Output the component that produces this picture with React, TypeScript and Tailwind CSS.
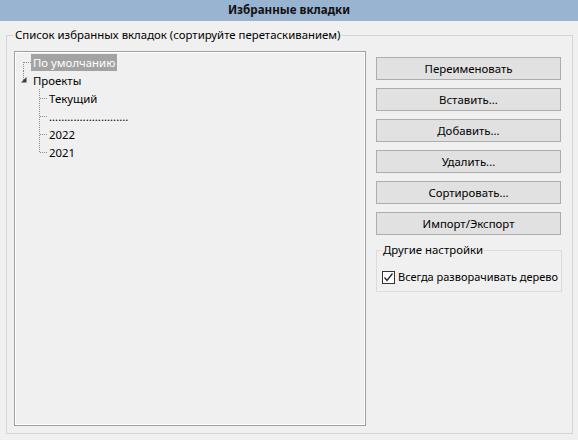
import React from "react";

const FONT = { fontFamily: '"Noto Sans", "Open Sans", sans-serif' };

type Row = {
  label: string;
  selected?: boolean;
  guides: React.ReactNode[];
};

const DOT = "#8c8c8c";

function Cell({ children }: { children?: React.ReactNode }) {
  return (
    <svg width="16" height="18" viewBox="0 0 16 18" className="shrink-0 block">
      {children}
    </svg>
  );
}

const vFull = <line x1="7.5" y1="0" x2="7.5" y2="18" stroke={DOT} strokeDasharray="1 1" />;
const vTopHalf = <line x1="7.5" y1="0" x2="7.5" y2="9" stroke={DOT} strokeDasharray="1 1" />;
const vBottomHalf = <line x1="7.5" y1="9" x2="7.5" y2="18" stroke={DOT} strokeDasharray="1 1" />;
const hHalf = <line x1="8" y1="9.5" x2="15" y2="9.5" stroke={DOT} strokeDasharray="1 1" />;
const triangle = <polygon points="10.5,6 10.5,11.5 5,11.5" fill="#3c3c3c" />;

const rows: Row[] = [
  { label: "По умолчанию", selected: true, guides: [<Cell key="a">{vBottomHalf}{hHalf}</Cell>] },
  { label: "Проекты", guides: [<Cell key="a">{vTopHalf}{triangle}</Cell>] },
  { label: "Текущий", guides: [<Cell key="a" />, <Cell key="b">{vFull}{hHalf}</Cell>] },
  { label: "..........................", guides: [<Cell key="a" />, <Cell key="b">{vFull}{hHalf}</Cell>] },
  { label: "2022", guides: [<Cell key="a" />, <Cell key="b">{vFull}{hHalf}</Cell>] },
  { label: "2021", guides: [<Cell key="a" />, <Cell key="b">{vTopHalf}{hHalf}</Cell>] },
];

function WinButton({ children }: { children: React.ReactNode }) {
  return (
    <button className="h-[23px] w-[185px] bg-[#e1e1e1] border border-[#adadad] text-[11.4px] text-black leading-none flex items-center justify-center">
      {children}
    </button>
  );
}

export default function App() {
  return (
    <div className="w-[578px] h-[440px] bg-[#f0f0f0] text-black flex flex-col overflow-hidden" style={FONT}>
      <div className="h-[21px] bg-[#99b4d1] border-b border-[#a6b3c2] flex items-center justify-center text-[11.6px] font-bold text-[#111]">
        Избранные вкладки
      </div>
      <fieldset className="ml-[6px] mt-[6px] w-[566px] h-[407px] border border-[#d5d5d5] pl-[7px] pr-[10px]">
        <legend className="px-[2px] -ml-[1px] text-[11.4px] leading-[16px]">
          Список избранных вкладок (сортируйте перетаскиванием)
        </legend>
        <div className="flex mt-[8px]">
          <div className="w-[352px] h-[375px] border border-[#a0a0a0] shadow-[inset_0_0_0_1px_#ffffff] p-[1px] flex flex-col">
            {rows.map((r, i) => (
              <div key={i} className="flex items-center h-[18px]">
                {r.guides}
                <span
                  className={
                    "text-[11.4px] leading-[17px] px-[2px] -ml-[1px] whitespace-nowrap " +
                    (r.selected ? "bg-[#a3a3a3] text-white" : "text-black")
                  }
                >
                  {r.label}
                </span>
              </div>
            ))}
          </div>
          <div className="ml-[10px] pt-[6px] flex flex-col gap-[8px] w-[186px]">
            <WinButton>Переименовать</WinButton>
            <WinButton>Вставить...</WinButton>
            <WinButton>Добавить...</WinButton>
            <WinButton>Удалить...</WinButton>
            <WinButton>Сортировать...</WinButton>
            <WinButton>Импорт/Экспорт</WinButton>
            <fieldset className="mt-[-1px] w-[186px] h-[50px] border border-[#dcdcdc] pl-[5px]">
              <legend className="px-[1px] text-[11.4px] leading-[16px]">Другие настройки</legend>
              <label className="flex items-center gap-[3px] mt-[11px] text-[11px] whitespace-nowrap">
                <span className="w-[13px] h-[13px] border border-[#333] bg-white flex items-center justify-center shrink-0">
                  <svg width="11" height="11" viewBox="0 0 11 11">
                    <polyline points="1.5,5.5 4,8.5 9.5,1.5" fill="none" stroke="#222" strokeWidth="1.3" />
                  </svg>
                </span>
                Всегда разворачивать дерево
              </label>
            </fieldset>
          </div>
        </div>
      </fieldset>
    </div>
  );
}
